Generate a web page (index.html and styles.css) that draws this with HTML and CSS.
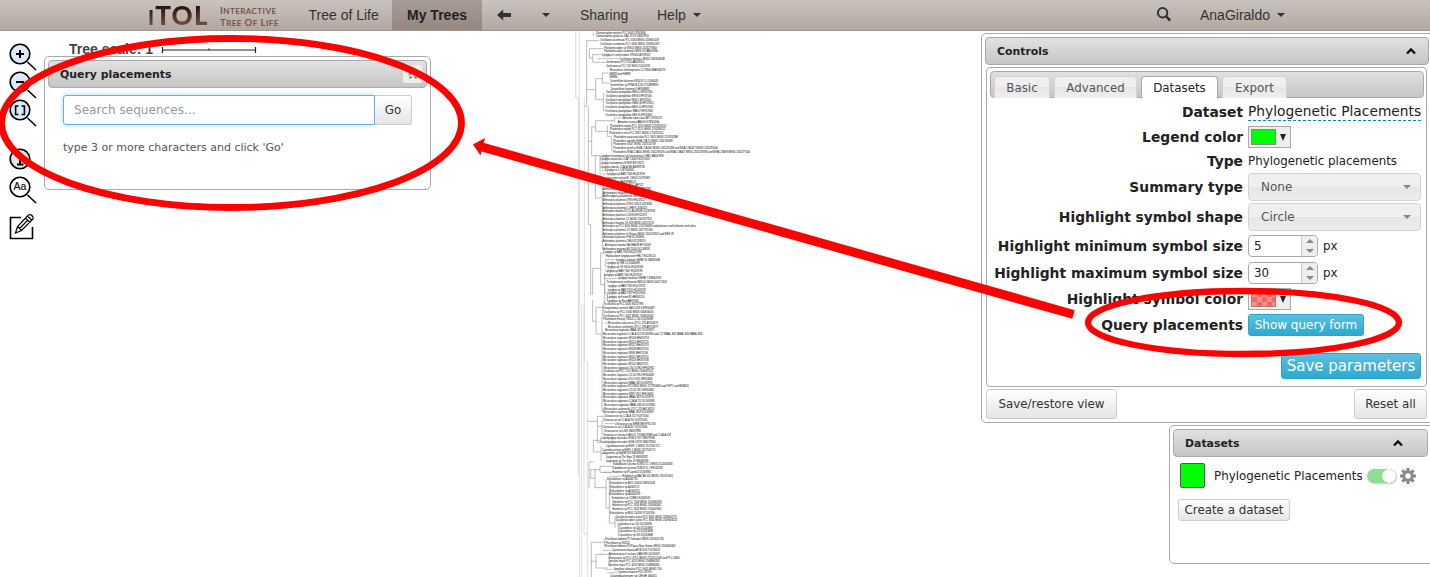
FILE: index.html
```
<!DOCTYPE html>
<html lang="en">
<head>
<meta charset="utf-8">
<title>iTOL: Interactive Tree Of Life</title>
<link rel="stylesheet" href="styles.css">
</head>
<body>
<header class="navbar">
  <div class="logo"><span class="logo-mark"><small>I</small>TOL</span><span class="logo-sub"><span>I<small>NTERACTIVE</small></span><span>T<small>REE</small> O<small>F</small> L<small>IFE</small></span></div>
  <nav class="nav">
    <a class="nav-tol">Tree of Life</a>
    <a class="nav-my active">My Trees</a>
    <a class="nav-back"><svg width="14" height="12" viewBox="0 0 14 12"><path d="M0 6 6.2 .6V4H14v4H6.2v3.4z" fill="#333"/></svg></a>
    <a class="nav-drop"><i class="caret"></i></a>
    <a class="nav-share">Sharing</a>
    <a class="nav-help">Help<i class="caret"></i></a>
  </nav>
  <div class="nav-right">
    <svg width="16" height="16" viewBox="0 0 16 16" fill="none" stroke="#333"><circle cx="6.6" cy="6.8" r="4.7" stroke-width="2"/><path d="M10 10.200 14.200 14.600" stroke-width="2.600"/></svg>
    <a class="nav-user">AnaGiraldo<i class="caret"></i></a>
  </div>
</header>
<main class="workspace">
  <aside class="tools">
    <svg class="tool" viewBox="0 0 30 28"><path d="m17.5 18 8.500 8"/><circle cx="10" cy="10" r="9.8" fill="#d9e9fb"/><path d="M10 6v8M6 10h8" stroke-width="2"/></svg>
    <svg class="tool" viewBox="0 0 30 28"><path d="m17.5 18 8.500 8"/><circle cx="10" cy="10" r="9.8" fill="#d9e9fb"/><path d="M6 10h8" stroke-width="2"/></svg>
    <svg class="tool" viewBox="0 0 30 28"><path d="m17.5 18 8.500 8"/><circle cx="10" cy="10" r="9.8" fill="#d9e9fb"/><path d="M8.500 6H5.600v8.500H8.500M11.500 6h2.900v8.500H11.500" stroke-width="1.600"/></svg>
    <svg class="tool tool-info" viewBox="0 0 30 28"><circle cx="10" cy="10" r="9.8" fill="#d5ebe0"/><path d="M10 7v8.500M7 8h3M7 15.500h6.500" stroke-width="2"/></svg>
    <svg class="tool" viewBox="0 0 30 28"><path d="m17.500 18 8.500 8"/><circle cx="10" cy="10" r="9.800" fill="#fff"/><text x="10" y="13.300" text-anchor="middle" class="tool-text">Aa</text></svg>
    <svg class="tool tool-edit" viewBox="0 0 30 28"><path d="M11 4.500H.5v21H22.500V14"/><path d="m5.500 20 2-6.500L18.500 2q2-1 3.500.500t1 3.500L11.500 17.500zM7.500 13.500l4 4M15.500 5l4.500 4.500M17.500 3l4.500 4.500M9.500 15.500l8-8" stroke-width="1.200"/></svg>
  </aside>
  <section class="left">
    <div class="scale"><b>Tree scale: 1</b><svg width="96" height="8" viewBox="0 0 96 8"><path d="M1.500 1v6M94.500 1v6M1.500 4h93M48 2.500v2" fill="none" stroke="#222" stroke-width="1.200"/></svg></div>
    <div class="panel query">
      <div class="bar">Query placements<span class="close"><svg width="10" height="10" viewBox="0 0 10 10"><path d="m1 6 4-4 4 4M1.500 9.500l2-2M8.500 9.500l-2-2" fill="none" stroke="#888" stroke-width="2"/></svg></span></div>
      <div class="search"><span class="field">Search sequences...</span><span class="btn go">Go</span></div>
      <p class="hint">type 3 or more characters and click 'Go'</p>
    </div>
  </section>
  <svg class="tree" viewBox="0 9 690 1638">
    <g fill="none" stroke="#999" stroke-width="2">
      <path stroke="#ccc" d="M17 0V208H25V1342M28 0V1647M35 830V1647M43 208V1000M42 826V1517H51M52 1000V1647"/>
      <path d="M50 38V235H43M50 38H88M70 15V25M58 62H100M58 62V90H68M68 80H97M68 80V103H108M82 92H146M50 185H77M77 152V215H100M77 152H97M97 135V165H118M97 135H114M100 195V248H106M55 235V589M65 297V383H90M65 297H77M77 278V310H112M77 278H133M133 270H158M112 293V325M112 325H125M125 327V371M133 271V282M65 340H55M90 383V460M76 383V510H97"/>
      <path d="M93 427H108M96 438H112M97 475V664M55 589H62V798M68 721V798H62M68 721H92M92 675V770M92 675H102M108 695H136M106 695V717M92 770H104M104 735V825M100 752H142M104 763V795H112M112 795V818M97 574V585"/>
      <path d="M68 816V880M68 880H78M78 838V918H95M78 838H98M98 830V865M96 865V1152M104 885H112M96 1143H104M52 1180H82M82 1165V1195H96M82 1165H102M96 1177V1220M104 1187H133M82 1195V1243H93"/>
      <path d="M57 1302V1380M57 1302H70M70 1237V1272H93M70 1237H90M92 1230V1245M93 1255V1300M93 1277H106M62 1325H90M90 1315H126M90 1315V1333H125M62 1325V1351H75M75 1323V1379H108M108 1353V1440M98 1333H124M108 1440H118M118 1355V1485H135M135 1465V1500M145 1490V1524M120 1345H154M64 1543V1647M64 1543H104M104 1533V1557M64 1600H78M78 1579V1620H112M78 1579H96M98 1567H124M90 1579H116M116 1600V1614M104 1624H130M112 1634H142"/>
    </g>
    <g class="leaves" id="leaves"></g>
  </svg>
  <section class="right">
    <div class="panel controls">
      <div class="bar">Controls<svg class="chev" viewBox="0 0 10 8"><path d="m1 6.500 4-4 4 4"/></svg></div>
      <div class="inner">
        <div class="tabs"><span class="tab basic">Basic</span><span class="tab adv">Advanced</span><span class="tab data on">Datasets</span><span class="tab exp">Export</span></div>
        <div class="form">
          <label>Dataset</label><div><span class="edit">Phylogenetic Placements</span></div>
          <label>Legend color</label><div><span class="picker"><i class="swatch green"></i><em></em></span></div>
          <label>Type</label><div class="type">Phylogenetic placements</div>
          <label>Summary type</label><div><span class="select">None<i class="caret"></i></span></div>
          <label>Highlight symbol shape</label><div><span class="select">Circle<i class="caret"></i></span></div>
          <label>Highlight minimum symbol size</label><div><span class="spin">5<i class="arrows"></i></span>px</div>
          <label>Highlight maximum symbol size</label><div><span class="spin">30<i class="arrows"></i></span>px</div>
          <label>Highlight symbol color</label><div><span class="picker"><i class="swatch check"></i><em></em></span></div>
          <label>Query placements</label><div><span class="blue show">Show query form</span></div>
        </div>
        <div class="save-row"><span class="blue save">Save parameters</span></div>
      </div>
      <div class="foot"><span class="btn restore">Save/restore view</span><span class="btn reset">Reset all</span></div>
    </div>
    <div class="panel datasets">
      <div class="bar">Datasets<svg class="chev" viewBox="0 0 10 8"><path d="m1 6.500 4-4 4 4"/></svg></div>
      <div class="ds-row"><i class="ds-color"></i><span class="ds-name">Phylogenetic Placements</span><i class="toggle"></i><svg class="gear" viewBox="-8 -8 16 16"><circle r="4.300" fill="none" stroke="#888" stroke-width="3"/><path d="M0-8V-5M0 5V8M-8 0H-5M5 0H8M-5.700-5.700-3.700-3.700M3.700 3.700 5.700 5.700M-5.700 5.700-3.700 3.700M3.700-3.700 5.700-5.700" stroke="#888" stroke-width="3.200"/></svg></div>
      <span class="btn create">Create a dataset</span>
    </div>
  </section>
</main>
<svg class="marks" viewBox="0 0 1430 577">
  <g fill="none" stroke="red"><ellipse cx="231.500" cy="123" rx="230" ry="84.500" stroke-width="6.800"/><ellipse cx="1243.500" cy="322.500" rx="155.500" ry="31.500" stroke-width="6.300"/><path d="M1073.500 314.500 482 147" stroke-width="9"/></g>
  <path d="m473 144.500 12-6.500-4.500 17.500z" fill="red"/>
</svg>
<script src="tree.js"></script>
</body>
</html>
```
FILE: styles.css
```
* { box-sizing: border-box; }
body { margin: 0; width: 1430px; height: 577px; overflow: hidden; position: relative; background: #fff; font-family: "DejaVu Sans", sans-serif; font-size: 11.850px; color: #222; }
i, em { font-style: normal; }
.navbar { height: 31px; display: flex; background: linear-gradient(#c9c3be, #b2a8a1); border-bottom: 1px solid #a5978f; font: 14px "Liberation Sans", sans-serif; color: #333; }
.logo { margin-left: 148px; width: 146px; display: flex; }
.logo-mark { width: 72px; font: 900 26px/31px Lato, sans-serif; letter-spacing: 1.200px; background: linear-gradient(#2a1008 20%, #74503d 85%); -webkit-background-clip: text; background-clip: text; color: transparent; }
.logo-mark small { font-size: 20px; }
.logo-sub { display: flex; flex-direction: column; padding-top: 5px; font: bold 9.500px/11px Lato, sans-serif; letter-spacing: .450px; color: #765546; white-space: nowrap; }
.logo-sub small { font-size: 8px; }
.nav { display: flex; line-height: 31px; white-space: nowrap; }
.nav a { display: flex; align-items: center; }
.nav-tol { width: 98px; padding-left: 14.500px; }
.nav-my { width: 90px; height: 30px; justify-content: center; }
.active { font-weight: bold; color: #222; background: linear-gradient(#a89d96, #94877f); }
.nav-back { width: 60px; padding-left: 15px; }
.nav-drop { width: 38px; }
.nav-share { width: 77px; }
.caret { display: inline-block; border: 4px solid transparent; border-top-color: #333; border-bottom: 0; }
.nav-help .caret, .nav-user .caret { margin-left: 7px; }
.nav-right { margin-left: auto; width: 274px; display: flex; gap: 28px; padding-top: 6px; }
.nav-user { display: flex; align-items: center; height: 18px; }
.workspace { height: 546px; display: flex; align-items: flex-start; }
.tools { width: 44px; padding: 13px 0 0 10px; display: flex; flex-direction: column; fill: none; stroke: #000; stroke-width: 1.600; }
.tool { width: 30px; height: 28px; overflow: visible; flex: none; }
.tool-info { margin-top: 21px; }
.tool-edit { margin-top: 8px; }
.tool-text { font: 10.500px "Liberation Sans", sans-serif; fill: #111; stroke: #111; stroke-width: .2; }
.left { width: 526px; padding-top: 11px; }
.scale { height: 14px; display: flex; align-items: center; padding-left: 25px; gap: 10px; font: 14px "Liberation Sans", sans-serif; color: #444; }
.scale b { width: 82px; white-space: nowrap; }
.scale svg { margin-top: 2px; }
.panel { border: 1px solid #aaa; border-radius: 5px; background: #fff; }
.query { width: 387px; height: 134px; padding: 3px; }
.bar { height: 28px; border: 1px solid #aaa; border-radius: 4px; background: linear-gradient(#e1e1e1, #c6c6c6); padding: 0 12px 0 11px; display: flex; align-items: center; justify-content: space-between; font-weight: bold; font-size: 10.900px; }
.query .bar { width: 379px; padding-right: 4px; }
.close { width: 19px; height: 18px; border-radius: 3px; background: #eee; display: grid; place-items: center; }
.search { display: flex; margin: 7px 0 0 15px; }
.field { width: 312px; height: 30px; border: 1px solid #66afe9; border-radius: 3px 0 0 3px; box-shadow: 0 0 5px #a9d4f5; padding-left: 10px; line-height: 28px; font-size: 12.100px; color: #999; }
.btn { border: 1px solid #ccc; border-radius: 3px; background: linear-gradient(#fff, #e5e5e5); color: #333; display: flex; align-items: center; justify-content: center; white-space: nowrap; }
.go { width: 37px; height: 30px; border-left: 0; border-radius: 0 3px 3px 0; }
.hint { margin: 15px 0 0 15px; font-size: 11px; line-height: 16px; color: #555; }
.tree { width: 230px; height: 546px; flex: none; }
.leaves { font: 8.800px "Liberation Sans", sans-serif; fill: #000; }
.right { width: 630px; flex: none; display: flex; flex-direction: column; padding: 2px 0 0 181px; }
.controls { width: 470px; height: 390px; padding: 3px; }
.controls .bar { width: 444px; }
.inner { width: 441px; height: 320px; margin: 2px 0 0 1px; border: 1px solid #aaa; border-radius: 4px; padding: 3px; }
.tabs { width: 434px; height: 27px; border: 1px solid #aaa; border-radius: 4px; background: linear-gradient(#e0e0e0, #c6c6c6); padding: 4px 3px 0; display: flex; gap: 4px; color: #555; }
.tab { height: 22px; border: 1px solid #d3d3d3; border-bottom: 0; border-radius: 4px 4px 0 0; background: linear-gradient(#efefef 50%, #e6e6e6 50%, #eee); display: flex; align-items: center; justify-content: center; }
.basic { width: 56px; } .adv { width: 83px; } .data { width: 77px; } .exp { width: 65px; }
.on { height: 23px; background: #fff; border-color: #aaa; color: #222; }
.form { display: grid; grid-template-columns: 253px 173px; column-gap: 5px; grid-template-rows: 25px 25px 22.500px 30px 30.500px 27.500px 26.500px 25.500px 26px; align-items: center; padding-top: 1.500px; }
.form label { font-weight: bold; font-size: 13.850px; text-align: right; white-space: nowrap; }
.form div { display: flex; align-items: center; gap: 5px; white-space: nowrap; }
.edit { font-size: 13.800px; line-height: 17px; height: 18px; border-bottom: 1px dashed #08c; }
.picker { width: 43px; height: 22px; border: 1px solid #aaa; background: #eee; display: flex; align-items: center; padding-left: 2px; gap: 4px; }
.swatch { width: 25px; height: 16px; border: 1px solid #888; }
.green { background: #0f0; }
.check { background: repeating-conic-gradient(#e86b66 0 25%, #ff8e88 0 50%) 0 0 / 10px 10px; border-color: #b77; }
.picker em { border: 3.500px solid transparent; border-top: 7px solid #222; border-bottom: 0; }
.select { width: 173px; height: 28px; border: 1px solid #d3d3d3; border-radius: 4px; background: linear-gradient(#efefef 50%, #e6e6e6 50%, #ededed); color: #555; display: flex; justify-content: space-between; align-items: center; padding: 0 9px 0 12px; font-size: 12px; }
.select .caret { border-top-color: #888; }
.spin { width: 70px; height: 22px; border: 1px solid #aaa; border-radius: 4px; display: flex; justify-content: space-between; align-items: center; padding-left: 5px; overflow: hidden; }
.arrows { width: 16px; height: 20px; background: #eee; border-left: 1px solid #ccc; display: flex; flex-direction: column; align-items: center; justify-content: space-around; }
.arrows::before { content: ""; border: 4px solid transparent; border-bottom-color: #888; border-top: 0; }
.arrows::after { content: ""; border: 4px solid transparent; border-top-color: #888; border-bottom: 0; }
.blue { color: #fff; border: 1px solid #2fa4cb; border-radius: 3px; background: linear-gradient(#5bc0de, #2fa8d0); display: flex; align-items: center; justify-content: center; white-space: nowrap; }
.show { width: 116px; height: 22px; font-size: 12px; }
.save-row { display: flex; justify-content: flex-end; padding: 15px 2px 0 0; }
.save { width: 140px; height: 26px; font-size: 15px; }
.foot { width: 441px; margin: 2px 0 0 1px; display: flex; justify-content: space-between; }
.restore { width: 131px; height: 30px; } .reset { width: 73px; height: 30px; }
.chev { width: 10px; height: 8px; fill: none; stroke: #111; stroke-width: 2.400; }
.datasets { width: 270px; height: 139px; margin: 2px 0 0 188px; padding: 3px; }
.datasets .bar { width: 255px; padding-right: 24px; }
.ds-row { display: flex; align-items: center; margin: 6px 0 0 7px; height: 25px; }
.ds-color { width: 25px; height: 25px; background: #0f0; border: 1px solid #555; border-radius: 2px; }
.ds-name { width: 148px; margin-left: 9px; white-space: nowrap; }
.toggle { width: 29px; height: 14px; margin: 0 4px 0 5px; border-radius: 7px; background: radial-gradient(circle at 22px 7px, #fff 6.500px, transparent 7px) #8ede96; box-shadow: 1px 1px 2px #ccc; }
.gear { width: 16px; height: 16px; }
.create { width: 112px; height: 22px; margin: 11px 0 0 5px; }
.marks { position: absolute; left: 0; top: 0; width: 1430px; height: 577px; pointer-events: none; }
```
FILE: tree.js
```
// Each leaf: start, end, label. Leaves are evenly spaced down the tree.
const leaves = `77,228,Chamaesiphon minutus PCC 6605 CP003600
77,236,Chamaesiphon polonicus SAG 32.87 KM019953
90,267,Oscillatoria acuminata PCC 6304 IMGID 2509601039
90,269,Oscillatoria acuminata PCC 6304 IMGID 2509602267
102,260,Planktothricoides sp SR001 IMGID 2630279364
102,264,Planktothricoides raciborskii NIES 207 AB045960
97,242,Lyngbya cf confervoides VP0401 AY599507
148,284,Oscillatoria limnetica IMGID 2663508588
109,222,Geitlerinema PCC7105 AB039010
109,240,Geitlerinema sp PCC 7105 IMGID 2510103330
119,286,Microcoleus chthonoplastes CCY9604 MAE508279
117,181,SMR83 and H0B98
118,142,SMR84
121,264,Desertifilum tharense KR2013 1.5 JQ80028
121,265,Desertifilum sp PPM0 B 1220 2702889893
122,238,Desertifilum tharense 4 HF568883
108,247,Oscillatoria spongelidae HR04 2 EF537056
107,245,Oscillatoria spongelidae SRS6 3 EF537056
106,243,Oscillatoria spongelidae SRS4 1 EF537054
107,251,Oscillatoria spongelidae GBS4 46 EF537061
106,249,Oscillatoria spongelidae GBS5 50 EF537063
106,249,Oscillatoria spongelidae SHA 47 EF537062
106,247,Oscillatoria spongelidae GBS 45 EF537061
159,276,Annamia tropica toxic APC GT816167
143,268,Annamia toxica AB003 GT816166
121,289,Planktothrix tepida PCC 9214 IMGID 2702932102
120,286,Planktothrix tepida PCC 9214 IMGID 2702890111
118,281,Planktothrix serta PCC 8927 IMGID 2702070211
131,324,Planktothrix paucivesiculata PCC 9631 IMGID 2702932388
130,308,Planktothrix agardhii NIVA CYA 15 IMGID 2562290069
130,257,Planktothrix st147 IMGID 2507516739
130,444,Planktothrix prolifica NIVA CYA 406 IMGID 2562291386 and NIVA CYA 407 IMGID 2562293540
130,540,Planktothrix NIVA CYA405 IMGID 2562290190 and NIVA CYA407 IMGID 2562293390 and NIVA CYA 98 IMGID 2562277004
92,281,Lyngbya hieronymusii var hieronymusii CHM 1 AB045906
91,241,Lyngbya majuscula CCAP 1446 4 EU710207
92,222,Lyngbya hieronymusii H N393 EF178271
92,224,Lyngbya robusta CCALA 966 AM398738
106,192,Lyngbya st 1.1 MT044903
112,225,Lyngbya sp BAN TS06 HQ419190
110,240,Limnoraphis robusta BL J IMGID 2507926869
100,197,Lyngbya sp AM398813
98,220,Arthrospira platensis PCC AF527
98,243,Arthrospira platensis MI DQ393282
98,244,Arthrospira maxima KCTC AG209280
98,225,Arthrospira platensis NIES 39
98,227,Arthrospira platensis UTEX HG209227
98,246,Arthrospira platensis UTEX 2340 DQ393280
98,231,Arthrospira platensis CHM KJ430023
98,256,Arthrospira maxima KCTC AG209280 DQ393281
98,230,Arthrospira platensis CG590 EF222473
98,245,Arthrospira platensis C1 IMGID 2507027852
98,252,Arthrospira maxima CS 328 IMGID 643170170
98,378,Arthrospira sp PCC 8005 IMGID 2701930859 and platensis and fusiformis and indica
98,248,Arthrospira platensis YZ IMGID 2627705236
98,311,Arthrospira platensis str Paraca IMGID 2505129652 and NIES 39
100,222,Arthrospira platensis FS8 KC196963
98,226,Arthrospira platensis CB64 KC195870
104,243,Arthrospira maxima FACHB438 EF750003
99,241,Arthrospira maxima BJ 2000 DQ208191
100,214,Lyngbya sp BAN TS30 HQ419196
108,256,Hydrocoleum lyngbyaceum HBC7 EU249123
138,270,Lyngbya aestuarii SERB 16 KM062668
110,209,Lyngbya sp SM 13 JX066098
110,219,Lyngbya sp OR 3013a HQ419208
107,217,Lyngbya sp BAN TS01 HQ419198
103,216,Lyngbya sp BAN TS02 HQ419197
143,274,Lyngbya aestuarii SERB 7 KM062659
109,291,Trichodesmium erythraeum IMS101 IMGID 640717642
113,226,Lyngbya sp BAN TS35 HQ419192
113,228,Lyngbya sp BAN TS31 HQ419197
113,226,Lyngbya sp BAN TS29 HQ419206
112,223,Lyngbya sp Finess92 HB903124
112,206,Lyngbya sp Niss AB67062
100,220,Oscillatoria sp PCC 6506 KU517996
100,254,Kamptonema animale SAG 1459 6 EF654087
100,250,Oscillatoria sp PCC 6506 IMGID 640826045
100,251,Oscillatoria sp PCC 6407 IMGID 2508516342
100,249,Phormidium murrayi TM2ULC 130 DQ493498
113,264,Microcoleus antarcticus UTCC 474 AF218373
113,265,Microcoleus rushforthii UTCC 296 AF218377
105,254,Microcoleus vaginatus IBBAL M17 KC633971
99,398,Microcoleus vaginatus CCALA 152 KC633969 and C17 IBBAL M13 IBBAL M16 IBBAL M20
99,237,Microcoleus vaginatus SR106 MH470714
99,236,Microcoleus vaginatus SR110 MH470715
99,236,Microcoleus vaginatus SR157 MH470713
99,236,Microcoleus vaginatus SR108 MH470710
99,234,Microcoleus vaginatus SR68 MH470706
99,236,Microcoleus vaginatus SR101 MH470712
99,236,Microcoleus vaginatus SR105 MH470708
99,235,Microcoleus vaginatus SR102 MH470711
101,253,Microcoleus vaginatus CSU U KK1 EF667962
99,249,Oscillatoria sp PCC 7112 IMGID 2504087011
99,252,Microcoleus vaginatus CJ1 U2 KK2 EF654083
99,248,Microcoleus vaginatus CSU U KK1 EF654082
101,247,Microcoleus vaginatus IBBAL M2 KC633976
99,357,Microcoleus vaginatus PCC9802 IMGID 2727816800 and FGP 2 and HDM001
99,252,Microcoleus vaginatus CJ1 U2 KK1 EF654082
99,250,Microcoleus vaginatus SNP2 KK2 EF654080
99,252,Microcoleus vaginatus IBBAL M19 KC633970
99,253,Microcoleus vaginatus CCALA 757 KC633968
102,255,Microcoleus vaginatus IBBAL M10 KC633966
103,253,Microcoleus autumnalis UTCC 313 AF218370
99,251,Microcoleus vaginatus IBBAL M19 KC633969
103,236,Chroococcus sp CCALA 702 GQ375044
98,232,Chroococcus sp CCALA 701 GQ375045
134,257,Chroococcus sp SERB RB KP952740
98,232,Chroococcus sp CCALA 057 GQ375046
101,213,Chroococcus sp LN31 KM019985
98,303,Chroococcus minutus SAG 41 79 KM019988 and CCALA 055
93,255,Leptolyngbya mucedoi LEGE 07197 KM079346
93,257,Leptolyngbya mucedoi LEGE 07197 KM079345
108,269,Cyanobacterium sp ESFC 1 IMGID 2517567172
97,257,Cyanobacterium sp ESFC 1 IMGID 2517567171
98,222,Jaaginema sp NgKB7109 KM438182
107,234,Jaaginema sp Thc Etgn 19 KM438187
107,235,Jaaginema sp Thc Etgn 19 KM438186
129,308,Rubidibacter lacunae KORDI 51 2 IMGID 2524003392
127,278,Rubidibacter lacunae KORDI 51 2 EF126148
127,244,Halothece sp PCapes62 DQ059801
157,309,Halothece sp BAC AN 420 IMGID 2765325061
112,202,Euhalothece sp AJ000710
120,255,Euhalothece sp BDU 130013 KM350246
120,208,Euhalothece sp AJ000712
120,209,Euhalothece sp AJ000712
118,211,Euhalothece sp AJ000709
125,240,Euhalothece sp C1MBI1 EU628548
128,275,Halothece sp PCC 7418 IMGID 2503360393
127,274,Halothece sp PCC 7418 IMGID 2503360802
127,274,Halothece sp PCC 7418 IMGID 2503407663
120,254,Euhalothece sp BDU 130182 KT453706
137,320,Dactylococcopsis salina PCC 8305 IMGID 2509602275
137,321,Dactylococcopsis salina PCC 8305 IMGID 2509604013
142,246,Cyanothece sp 110 DQ243690
147,249,Cyanothece sp 104 DQ243687
147,249,Cyanothece sp 113 DQ243689
147,249,Cyanothece sp 109 DQ243688
105,281,Prochloron didemni P2 Solomon IMGID 2501651734
107,180,Prochloron sp X63141
105,316,Prochloron didemni P4 Papua New Guinea IMGID 2503056083
125,271,Cyanosarcina bavaria AICB 10157 KJ746507
116,269,Aphanocapsa cf rivularis UAM 388 JQ070059
114,329,Gloeocapsa sp PCC 6715 IMGID 2510101438 and PCC 6805
116,268,Spirulina major PCC 6313 IMGID 2508880208
116,268,Spirulina major PCC 6313 IMGID 2508880836
131,275,Spirulina subsalsa PCC 9445 IMGID 250
143,245,Oxynema thaianum FJ11 JN7785
120,260,Cyanobacterium sp LEGE 06001`.split('\n');
document.getElementById('leaves').innerHTML = leaves.map((row, i) => {
  const [start, end, label] = row.split(',');
  return `<text x="${start}" y="${(17 + i * 11.167).toFixed(1)}" textLength="${end - start}" lengthAdjust="spacingAndGlyphs">${label}</text>`;
}).join('');
```
